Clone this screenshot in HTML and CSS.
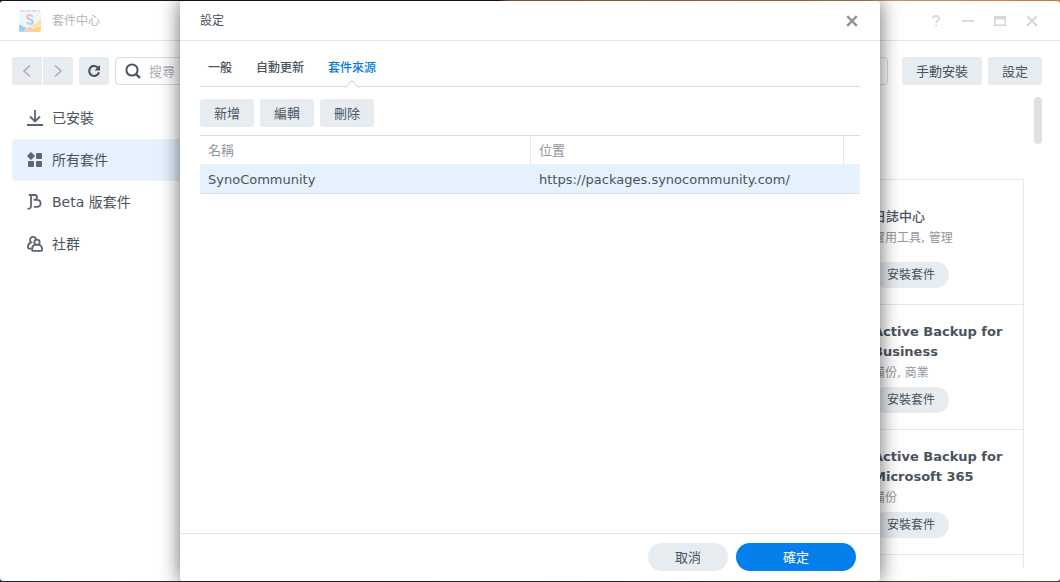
FILE: index.html
```html
<!DOCTYPE html>
<html lang="zh-Hant">
<head>
<meta charset="utf-8">
<title>套件中心</title>
<link rel="stylesheet" href="styles.css">
</head>
<body>
<main class="window">
  <header class="titlebar window-title">
    <svg class="app-icon" viewBox="0 0 22 22" width="22" height="22" aria-hidden="true">
      <defs>
        <linearGradient id="letter" x1="0" y1="0" x2="0" y2="1"><stop offset="0" stop-color="#f9b59c"/><stop offset=".5" stop-color="#c3b6e6"/><stop offset="1" stop-color="#8adbec"/></linearGradient>
      </defs>
      <rect y="1" width="22" height="21" rx="2" fill="#edf6fb"/>
      <path d="M1 .8h20" stroke="#b9cbe0" stroke-width="1.2" stroke-dasharray="5 1"/>
      <path d="M22 9c-3 1-3 4-6 5-2 0-3 2-4 3l10 2z" fill="#fde0a0"/>
      <path d="M0 15c3 0 4 2 6 2l3 5H2a2 2 0 0 1-2-2z" fill="#8fcdf5"/>
      <path d="M4 22c2-4 5-5 8-5l4 5z" fill="#f9c9b4"/>
      <path d="M11 22c2-4 6-5 11-5v3a2 2 0 0 1-2 2z" fill="#fbd07f"/>
      <path d="M13.600 6.900C13.100 5.500 12.100 5 11 5c-1.600 0-2.700.9-2.700 2.200 0 2.700 5.500 1.600 5.500 4.500 0 1.400-1.200 2.300-2.800 2.300-1.500 0-2.500-.7-3-2" fill="none" stroke="url(#letter)" stroke-width="2"/>
    </svg>
    <h1 class="title">套件中心</h1>
    <div class="window-controls">
      <button class="control" aria-label="說明"><svg viewBox="0 0 12 12" width="12" height="12"><path d="M2.700 3.600C2.700 1.800 4 .9 6 .9s3.300 1 3.300 2.600C9.300 5.500 6.200 5.500 6.200 8M6.200 9.800v1.900" fill="none" stroke="currentColor" stroke-width="1.700"/></svg></button>
      <button class="control" aria-label="最小化"><svg viewBox="0 0 12 12" width="12" height="12"><path d="M0 6h12" stroke="currentColor" stroke-width="1.800"/></svg></button>
      <button class="control" aria-label="最大化"><svg viewBox="0 0 12 12" width="12" height="12"><path d="M0 1h12v10H0zM1.500 4.500v5h9v-5z" fill="currentColor" fill-rule="evenodd"/></svg></button>
      <button class="control" aria-label="關閉"><svg viewBox="0 0 12 12" width="12" height="12"><path d="M1.300 1.300l9.400 9.400M10.700 1.300l-9.400 9.400" stroke="currentColor" stroke-width="2.200"/></svg></button>
    </div>
  </header>

  <div class="toolbar">
    <div class="nav-group">
      <button class="button nav" aria-label="上一頁"><svg viewBox="0 0 12 14" width="12" height="14"><path d="M9 1.500L3 7l6 5.500" fill="none" stroke="currentColor" stroke-width="1.600"/></svg></button>
      <button class="button nav" aria-label="下一頁"><svg viewBox="0 0 12 14" width="12" height="14"><path d="M3 1.500L9 7l-6 5.500" fill="none" stroke="currentColor" stroke-width="1.600"/></svg></button>
    </div>
    <button class="button refresh" aria-label="重新整理"><svg viewBox="0 0 14 14" width="14" height="14"><path d="M11.200 4A5 5 0 1 0 12 8.300" fill="none" stroke="currentColor" stroke-width="2.200"/><path d="M13 1v5.500H7.500z" fill="currentColor"/></svg></button>
    <label class="search">
      <svg viewBox="0 0 16 16" width="16" height="16" aria-hidden="true"><circle cx="7" cy="7" r="5.600" fill="none" stroke="currentColor" stroke-width="2"/><path d="M11 11l4 4" stroke="currentColor" stroke-width="2.400"/></svg>
      <input class="search-input" type="text" placeholder="搜尋" aria-label="搜尋">
    </label>
    <div class="actions">
      <button class="button">手動安裝</button>
      <button class="button">設定</button>
    </div>
  </div>

  <div class="content">
    <nav class="sidebar">
      <a class="side-link" href="#installed"><svg viewBox="0 0 16 16" width="16" height="16"><path d="M8 0v11M3 6.500l5 5 5-5M0 15h16" fill="none" stroke="currentColor" stroke-width="1.800"/></svg>已安裝</a>
      <a class="side-link selected" href="#all"><svg viewBox="0 0 16 16" width="16" height="16"><g fill="currentColor"><path d="M4 .3L7.700 4 4 7.700.3 4z" stroke="currentColor" stroke-linejoin="round" stroke-width=".6"/><rect x="9" y="1" width="6" height="6" rx="1"/><rect x="1" y="9" width="6" height="6" rx="1"/><rect x="9" y="9" width="6" height="6" rx="1"/></g></svg>所有套件</a>
      <a class="side-link" href="#beta"><svg viewBox="0 0 16 16" width="16" height="16"><path d="M.5 14.900c2.600 0 3.500-1.200 3.500-3.200V1.500M1.800 1H7.500c1.700 0 2.500 1 2.500 2.300S9.200 5.800 7.500 5.800H6.500M7.800 5.800h2c2.400 0 3.800 1.300 3.800 3.500s-1.400 3.500-3.800 3.500H6.800" fill="none" stroke="currentColor" stroke-width="1.800"/></svg>Beta 版套件</a>
      <a class="side-link" href="#community"><svg viewBox="0 0 16 16" width="16" height="16"><g fill="none" stroke="currentColor" stroke-width="1.800"><path d="M9 3.200A3 3 0 1 0 4.200 6.200C1.900 7.200.9 8.600.9 11.200c0 1 .4 1.400 1.400 1.400h2"/><circle cx="10" cy="6.300" r="2.700"/><path d="M7.800 8.600C6 9.500 5 11 5 13.200c0 1.200.5 1.700 1.500 1.700h7.200c1 0 1.500-.5 1.500-1.700 0-2.200-1-3.700-3-4.600"/></g></svg>社群</a>
    </nav>
    <section class="packages">
      <article class="card">
        <div class="card-text"><h2 class="card-name">日誌中心</h2><p class="card-tags">實用工具, 管理</p></div>
        <button class="button pill install">安裝套件</button>
      </article>
      <article class="card">
        <div class="card-text"><h2 class="card-name" lang="en">Active Backup for Business</h2><p class="card-tags">備份, 商業</p></div>
        <button class="button pill install">安裝套件</button>
      </article>
      <article class="card">
        <div class="card-text"><h2 class="card-name" lang="en">Active Backup for Microsoft 365</h2><p class="card-tags">備份</p></div>
        <button class="button pill install">安裝套件</button>
      </article>
      <div class="card card-rest"></div>
    </section>
    <div class="scroll-track"><div class="scroll-thumb"></div></div>
  </div>
</main>

<section class="dialog" role="dialog" aria-labelledby="dialog-title">
  <header class="titlebar dialog-head">
    <h2 class="title" id="dialog-title">設定</h2>
    <button class="control close" aria-label="關閉"><svg viewBox="0 0 12 12" width="12" height="12"><path d="M1.200 1.200l9.600 9.600M10.800 1.200l-9.600 9.600" stroke="currentColor" stroke-width="2.400"/></svg></button>
  </header>
  <div class="dialog-body">
    <div class="tabs" role="tablist">
      <button class="tab" role="tab">一般</button>
      <button class="tab" role="tab">自動更新</button>
      <button class="tab active" role="tab" aria-selected="true">套件來源</button>
    </div>
    <div class="row-actions">
      <button class="button">新增</button>
      <button class="button">編輯</button>
      <button class="button">刪除</button>
    </div>
    <table class="sources">
      <colgroup><col class="col-name"><col><col class="col-end"></colgroup>
      <thead><tr><th>名稱</th><th>位置</th><th></th></tr></thead>
      <tbody><tr><td>SynoCommunity</td><td colspan="2">https://packages.synocommunity.com/</td></tr></tbody>
    </table>
  </div>
  <footer class="dialog-foot">
    <button class="button pill cancel">取消</button>
    <button class="button pill confirm">確定</button>
  </footer>
</section>
</body>
</html>
```

FILE: styles.css
```css
* {
  box-sizing: border-box;
}

body {
  position: relative;
  display: flex;
  height: 100vh;
  margin: 0;
  padding: 1px 0;
  overflow: hidden;
  color: #4a545e;
  background:
    linear-gradient(90deg, #1b1428 0 47%, #b5703f 48%, #c39a66 80%, #d0743a) top / 100% 6px no-repeat,
    linear-gradient(90deg, #1c262c, #3a2427 40%, #54453f) bottom / 100% 6px no-repeat,
    #ffffff;
  font-family: "DejaVu Sans", "Noto Sans CJK TC", sans-serif;
  font-size: 13px;
}

h1,
h2,
p {
  margin: 0;
}

button,
input {
  margin: 0;
  padding: 0;
  border: 0;
  color: inherit;
  background: none;
  font: inherit;
}

svg {
  display: block;
  flex: none;
}

.window {
  display: flex;
  flex: 1;
  flex-direction: column;
  min-width: 0;
  border-radius: 3px;
  background: #ffffff;
}

.titlebar {
  display: flex;
  flex: none;
  align-items: center;
  height: 40px;
  border-bottom: 1px solid #e4e6e8;
}

.window-title {
  gap: 11px;
  padding: 0 22px 0 19px;
  color: #b4b7ba;
}

.app-icon {
  opacity: 0.9;
}

.title {
  flex: 1;
  font-size: 12px;
  font-weight: 400;
  line-height: 20px;
}

.window-controls {
  display: flex;
  gap: 20px;
}

.control {
  color: #d5d7d8;
}

.toolbar {
  display: flex;
  flex: none;
  gap: 6px;
  padding: 16px 18px 12px 12px;
}

.button {
  height: 28px;
  padding: 1px 14px 0;
  border-radius: 3px;
  background: #e7ecf1;
  line-height: 27px;
  white-space: nowrap;
}

.nav-group {
  display: flex;
  gap: 1px;
}

.nav {
  padding: 0 9px;
  color: #a8afb6;
}

.nav:first-child {
  border-radius: 3px 0 0 3px;
}

.nav:last-child {
  border-radius: 0 3px 3px 0;
}

.refresh {
  padding: 0 8px;
}

.search {
  display: flex;
  flex: 1;
  align-items: center;
  gap: 8px;
  height: 28px;
  padding: 0 9px;
  border: 1px solid #d9dde0;
  border-radius: 4px;
}

.search-input {
  flex: 1;
  min-width: 0;
  outline: 0;
}

.search-input::placeholder {
  color: #a9adb1;
}

.actions {
  display: flex;
  gap: 6px;
  margin-left: 8px;
}

.content {
  display: flex;
  flex: 1;
  min-height: 0;
  padding: 0 18px 13px 12px;
}

.sidebar {
  flex: none;
  width: 216px;
  font-size: 14px;
  line-height: 20px;
}

.side-link {
  display: flex;
  align-items: center;
  gap: 9px;
  height: 42px;
  padding-left: 15px;
  border-radius: 4px;
  color: inherit;
  text-decoration: none;
}

.side-link svg {
  color: #5d6670;
}

.selected {
  background: #e5f1fd;
}

.packages {
  display: flex;
  flex: 1;
  flex-direction: column;
  align-items: flex-end;
  min-width: 0;
  padding-top: 82px;
  overflow: hidden;
}

.card {
  display: flex;
  flex: none;
  flex-direction: column;
  align-items: flex-start;
  width: 262px;
  height: 125px;
  padding: 17px 12px 0 110px;
  border: 1px solid #e4e9ed;
  border-bottom: 0;
}

.card-rest {
  flex: 1;
}

.card-text {
  display: flex;
  flex-direction: column;
  justify-content: center;
  min-height: 62px;
}

.card-name {
  font-size: 13px;
  font-weight: 500;
  line-height: 20px;
}

.card-name:lang(en) {
  font-weight: 700;
}

.card-tags {
  color: #92979c;
  font-size: 12px;
  line-height: 22px;
}

.pill {
  border-radius: 14px;
}

.install {
  height: 26px;
  margin-top: 3px;
  font-size: 12px;
  line-height: 25px;
}

.scroll-track {
  flex: none;
  width: 8px;
  margin-left: 10px;
}

.scroll-thumb {
  height: 47px;
  border-radius: 4px;
  background: #e1e1e1;
}

.dialog {
  position: absolute;
  inset: 1px 0;
  display: flex;
  flex-direction: column;
  width: 700px;
  max-width: 100%;
  margin: 0 auto;
  border-radius: 3px;
  background: #ffffff;
  box-shadow: 0 0 20px rgba(0, 0, 0, 0.6);
}

.dialog-head {
  padding: 0 22px 0 20px;
}

.close {
  color: #8f9499;
}

.dialog-body {
  flex: 1;
  padding: 16px 20px 0;
}

.tabs {
  display: flex;
  gap: 24px;
  height: 30px;
  padding: 0 8px;
  border-bottom: 1px solid #dadde0;
}

.tab {
  position: relative;
  font-size: 12px;
  font-weight: 500;
  line-height: 20px;
  height: 29px;
  padding-bottom: 8px;
}

.active {
  color: #0579e0;
}

.active::after {
  position: absolute;
  bottom: -6px;
  left: 50%;
  width: 9px;
  height: 9px;
  margin-left: -5px;
  border: solid #dadde0;
  border-width: 1px 0 0 1px;
  background: linear-gradient(135deg, #ffffff 60%, transparent 60%);
  content: "";
  transform: rotate(45deg);
}

.row-actions {
  display: flex;
  gap: 6px;
  padding: 12px 0 8px;
}

.sources {
  width: 100%;
  border-collapse: separate;
  border-spacing: 0;
  border-top: 1px solid #dadde0;
  table-layout: fixed;
  text-align: left;
}

.col-name {
  width: 331px;
}

.col-end {
  width: 16px;
}

.sources th {
  height: 28px;
  padding: 1px 8px 0;
  border-right: 1px solid #e4e8eb;
  color: #92979c;
  font-weight: 400;
  line-height: 20px;
}

.sources th:last-child {
  padding: 0;
  border-right: 0;
}

.sources td {
  height: 30px;
  padding: 2px 8px 0;
  border-bottom: 1px solid #d3e2ef;
  background: #e5f1fd;
  line-height: 20px;
}

.dialog-foot {
  display: flex;
  justify-content: flex-end;
  gap: 8px;
  padding: 9px 24px 10px;
  border-top: 1px solid #dde4e9;
}

.cancel {
  width: 80px;
}

.confirm {
  width: 120px;
  color: #ffffff;
  background: #057feb;
}
```
